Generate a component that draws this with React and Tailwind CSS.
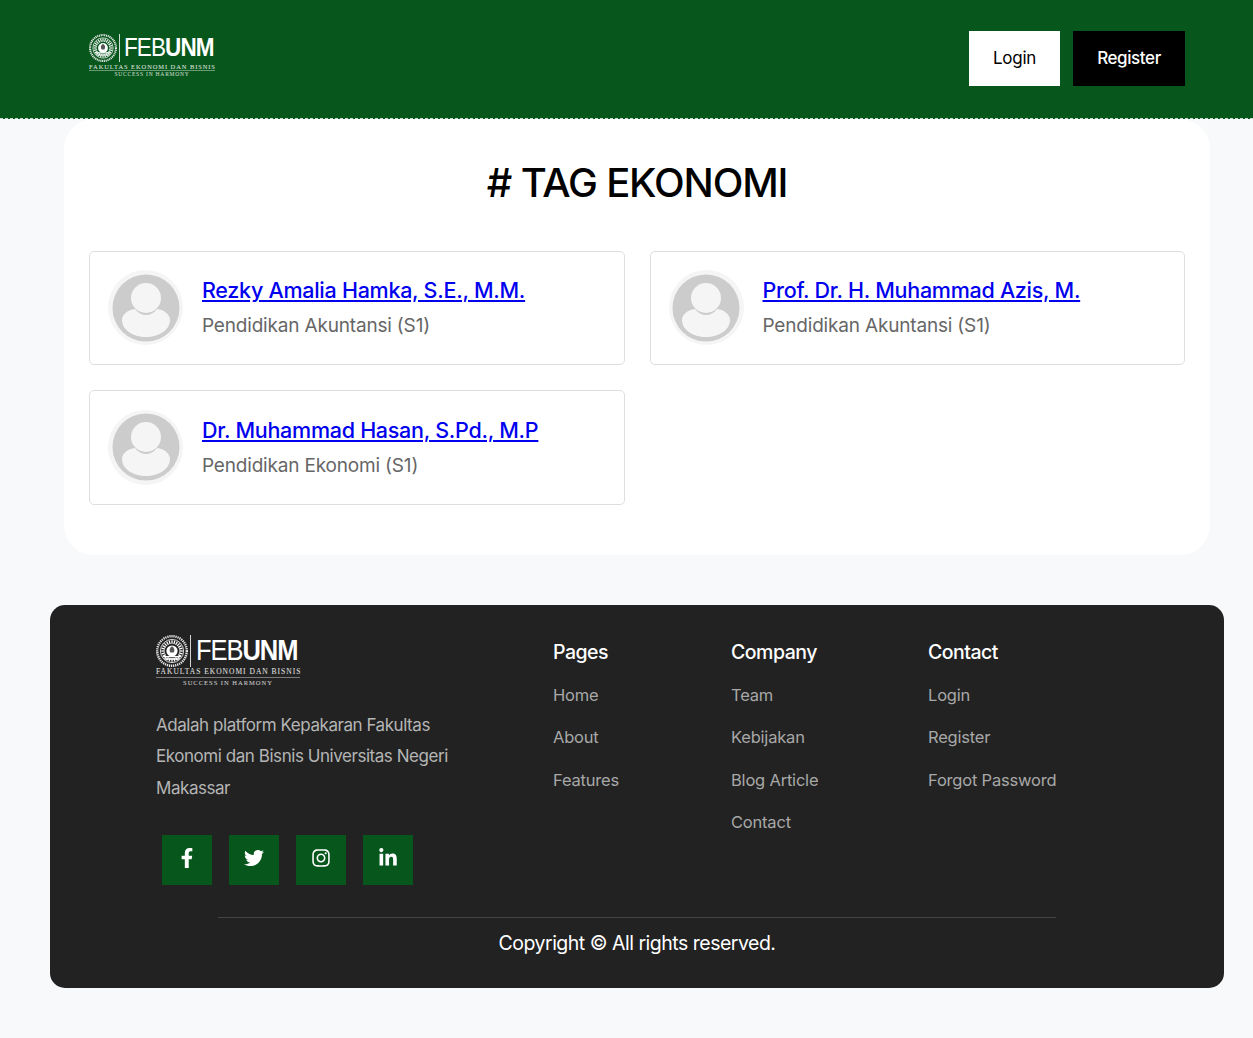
import { FaFacebookF, FaTwitter, FaInstagram, FaLinkedinIn } from "react-icons/fa";

const font = "font-['Inter','Noto_Sans',sans-serif]";

function Emblem({ size }) {
  const spokes = Array.from({ length: 24 }, (_, i) => i * 15);
  return (
    <svg width={size} height={size} viewBox="0 0 40 40" className="shrink-0">
      <circle cx="20" cy="20" r="18.5" fill="none" stroke="#e8e8e8" strokeWidth="3" strokeDasharray="1.6 1" />
      <circle cx="20" cy="20" r="14.5" fill="none" stroke="#fff" strokeWidth="1" />
      {spokes.map((a) => (
        <line key={a} x1="20" y1="6.5" x2="20" y2="11" stroke="#fff" strokeWidth="1.6" transform={`rotate(${a} 20 20)`} />
      ))}
      <circle cx="20" cy="20" r="7" fill="#fff" />
      <path d="M20 14c-3 2-4 5-2 8h4c2-3 1-6-2-8z" fill="#555" />
      <path d="M9 27h22M11 30h18" stroke="#fff" strokeWidth="1.6" />
    </svg>
  );
}

function Logo({ big }) {
  const w = big ? "w-[144px]" : "w-[126px]";
  return (
    <div className={`${w} flex flex-col items-center`}>
      <div className={`flex items-center w-full ${big ? "h-[32px] gap-[2px]" : "h-[30px] gap-[2px]"}`}>
        <Emblem size={big ? 32 : 28} />
        <div className={`w-px shrink-0 bg-white/80 ${big ? "h-[32px]" : "h-[28px]"}`}></div>
        <div
          className={`flex origin-left font-['Liberation_Sans',sans-serif] text-white leading-none ${
            big ? "text-[29px] tracking-[-1.2px] ml-[3px] scale-x-[.88]" : "text-[25px] tracking-[-1px] ml-[2px] -mt-[2px] scale-x-90"
          }`}
        >
          <span className="font-normal">FEB</span>
          <span className="font-bold">UNM</span>
        </div>
      </div>
      <div
        className={`font-['Liberation_Serif',serif] text-white/90 w-full whitespace-nowrap text-center border-b border-white/40 ${
          big ? "text-[7.5px] tracking-[1px] leading-[10px]" : "text-[6.5px] tracking-[0.9px] leading-[7px]"
        }`}
      >
        FAKULTAS EKONOMI DAN BISNIS
      </div>
      <div
        className={`font-['Liberation_Serif',serif] text-white/80 whitespace-nowrap ${
          big ? "text-[6.5px] tracking-[1px] leading-[9px]" : "text-[5.5px] tracking-[0.8px] leading-[7px]"
        }`}
      >
        SUCCESS IN HARMONY
      </div>
    </div>
  );
}

function Avatar() {
  return (
    <div className="w-[75px] h-[75px] rounded-full bg-[#f5f5f5] flex items-center justify-center shrink-0">
      <svg width="68" height="68" viewBox="0 0 68 68">
        <circle cx="34" cy="34" r="33.5" fill="#cccccc" />
        <circle cx="34" cy="24" r="15" fill="#f5f5f5" />
        <path
          d="M10 46C10 40 16 36 23 35C26 39 30 41 34 41C38 41 42 39 45 35C52 36 58 40 58 46C58 56 47 63 34 63C21 63 10 56 10 46Z"
          fill="#f5f5f5"
        />
      </svg>
    </div>
  );
}

function PersonCard({ name, program }) {
  return (
    <div className="h-[114.5px] bg-white border border-[#dedede] rounded-[5px] flex items-center pl-[18px] gap-[19px]">
      <Avatar />
      <div>
        <a href="#" className="block text-[21.5px] leading-[30px] tracking-[-0.27px] font-medium text-[#0000ee] underline">
          {name}
        </a>
        <p className="text-[19px] leading-[28px] mt-[7px] tracking-[-0.18px] text-[#666666]">{program}</p>
      </div>
    </div>
  );
}

function FooterColumn({ title, links, width }) {
  return (
    <div className={width}>
      <h4 className="text-[19.5px] leading-[30px] mt-[2px] tracking-[-0.5px] font-medium text-white">{title}</h4>
      <ul className="mt-[15px] flex flex-col gap-[16.5px]">
        {links.map((link) => (
          <li key={link} className="text-[16.5px] leading-[26px] tracking-[-0.2px] text-[#a8a8a8]">
            {link}
          </li>
        ))}
      </ul>
    </div>
  );
}

const socials = [FaFacebookF, FaTwitter, FaInstagram, FaLinkedinIn];

export default function App() {
  return (
    <div className={`${font} bg-[#f8f9fa] min-h-[1038px] pb-[50px]`}>
      {/* header */}
      <header className="h-[119px] bg-[#07561c] border-b border-dashed border-white/80 flex items-start justify-between pl-[89px] pr-[68px]">
        <div className="mt-[33px]">
          <Logo />
        </div>
        <div className="flex gap-[13px] mt-[31px]">
          <button className="w-[91px] h-[55px] bg-white text-black text-[17px] tracking-[-0.25px]">Login</button>
          <button className="w-[112px] h-[55px] bg-black text-white text-[17px] tracking-[-0.4px] font-medium">Register</button>
        </div>
      </header>

      {/* tag content */}
      <main className="mx-[64px] mr-[43px] bg-white rounded-[30px] px-[25px] pb-[50.4px]">
        <h1 className="text-center text-[40px] leading-[48px] tracking-[-1.15px] font-medium text-black pt-[39.5px]">
          # TAG EKONOMI
        </h1>
        <div className="grid grid-cols-2 gap-[25px] mt-[44.1px]">
          <PersonCard name="Rezky Amalia Hamka, S.E., M.M." program="Pendidikan Akuntansi (S1)" />
          <PersonCard name="Prof. Dr. H. Muhammad Azis, M." program="Pendidikan Akuntansi (S1)" />
          <PersonCard name="Dr. Muhammad Hasan, S.Pd., M.P" program="Pendidikan Ekonomi (S1)" />
        </div>
      </main>

      {/* footer */}
      <footer className="mt-[50px] ml-[50px] mr-[29px] h-[383px] bg-[#222222] rounded-[15px] pt-[30px]">
        <div className="flex h-[282px] pl-[106px]">
          <div className="w-[397px]">
            <Logo big />
            <p className="mt-[23px] w-[300px] text-[17px] leading-[31.5px] tracking-[-0.45px] text-[#b5b5b5]">
              Adalah platform Kepakaran Fakultas Ekonomi dan Bisnis Universitas Negeri Makassar
            </p>
            <div className="flex gap-[17px] mt-[30.5px] ml-[6px]">
              {socials.map((Icon, i) => (
                <a key={i} href="#" className="w-[50px] h-[50px] bg-[#07561c] flex items-center justify-center pb-[4px] text-white text-[20px]">
                  <Icon />
                </a>
              ))}
            </div>
          </div>
          <FooterColumn width="w-[178px]" title="Pages" links={["Home", "About", "Features"]} />
          <FooterColumn width="w-[197px]" title="Company" links={["Team", "Kebijakan", "Blog Article", "Contact"]} />
          <FooterColumn width="w-[140px]" title="Contact" links={["Login", "Register", "Forgot Password"]} />
        </div>
        <div className="ml-[168px] w-[838px] border-t border-[#444444]">
          <p className="text-center text-[19.5px] leading-[30px] tracking-[-0.5px] text-white mt-[10px]">
            Copyright © All rights reserved.
          </p>
        </div>
      </footer>
    </div>
  );
}
